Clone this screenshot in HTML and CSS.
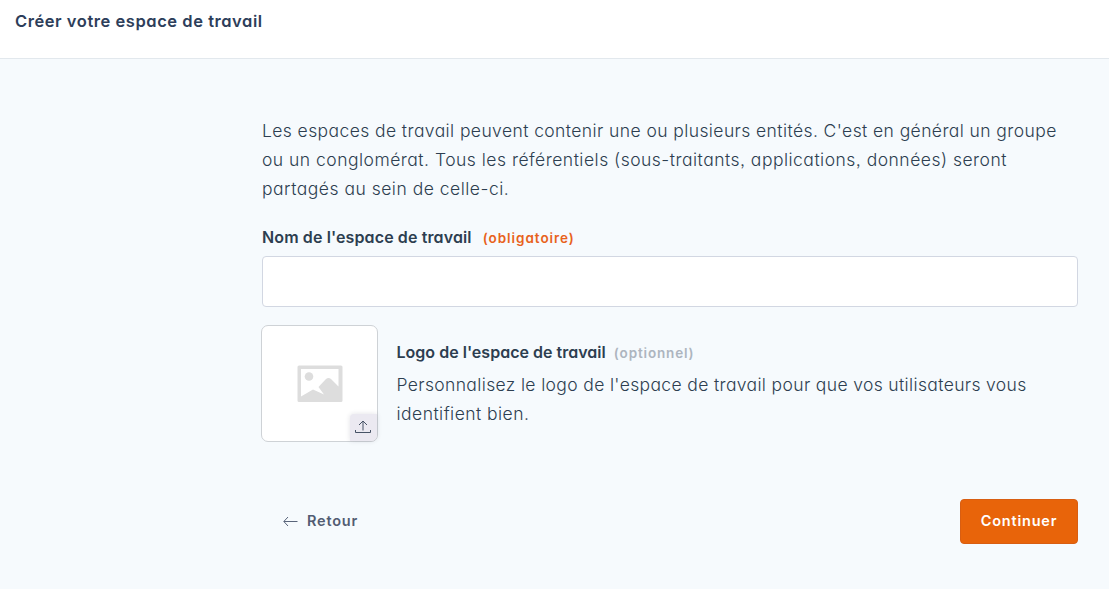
FILE: index.html
```html
<!DOCTYPE html>
<html lang="fr">
<head>
<meta charset="utf-8">
<title>Créer votre espace de travail</title>
<link rel="stylesheet" href="styles.css">
</head>
<body>
<header class="topbar"><h1 class="title">Créer votre espace de travail</h1></header>
<main class="content">
  <p class="text intro">
    <span class="line line-a">Les espaces de travail peuvent contenir une ou plusieurs entités. C'est en général un groupe</span>
    <span class="line line-b">ou un conglomérat. Tous les référentiels (sous-traitants, applications, données) seront</span>
    <span class="line line-c">partagés au sein de celle-ci.</span>
  </p>
  <div class="label-row">
    <label class="label" for="name">Nom de l'espace de travail</label>
    <span class="hint required">(obligatoire)</span>
  </div>
  <input class="field" id="name" type="text">
  <section class="logo-row">
    <div class="preview">
      <svg class="placeholder" width="46" height="38" viewBox="0 0 46 38">
        <path fill="#ddd" fill-rule="evenodd" d="M2 .5h42a1.500 1.500 0 0 1 1.500 1.500v33.500a1.500 1.500 0 0 1-1.500 1.500H2A1.500 1.500 0 0 1 .5 35.500V2A1.500 1.500 0 0 1 2 .5zM4 4v27.500L16 24.500l11 5-5.500-7.500 7.500-8q2.500-2 5 0l7.500 7.500V4z"/>
        <circle cx="12" cy="11.500" r="4.300" fill="#ddd"/>
      </svg>
      <button class="upload" aria-label="Importer">
        <svg width="16" height="14" viewBox="0 0 16 14" fill="none" stroke="#475366" stroke-width="1"><path d="M8 10.500V1M4 5l4-4 4 4M.5 10v2.500h15V10"/></svg>
      </button>
    </div>
    <div class="details">
      <div class="label-row">
        <span class="label logo-label">Logo de l'espace de travail</span>
        <span class="hint optional">(optionnel)</span>
      </div>
      <p class="text">
        <span class="line line-d">Personnalisez le logo de l'espace de travail pour que vos utilisateurs vous</span>
        <span class="line line-e">identifient bien.</span>
      </p>
    </div>
  </section>
  <footer class="actions">
    <a class="back"><svg width="15" height="10" viewBox="0 0 15 10" fill="none" stroke="#59647a" stroke-width="1"><path d="M14.500 5.500H1M5 1L.8 5.500 5 10"/></svg><span>Retour</span></a>
    <button class="submit">Continuer</button>
  </footer>
</main>
</body>
</html>
```
FILE: styles.css
```css
* { box-sizing: border-box; }
body {
  margin: 0;
  height: 589px;
  overflow: hidden;
  background: #f6fafd;
  color: #2d3e50;
  font-family: Inter, "Open Sans", sans-serif;
  font-feature-settings: "cv11", "ss03";
}
p, h1 { margin: 0; }
.topbar { height: 59px; padding: 9px 15px; background: #fff; border-bottom: 1px solid #e2e8ed; }
.title { font-size: 16.500px; line-height: 24px; font-weight: 560; letter-spacing: 0.55px; color: #2d3e5a; white-space: nowrap; }
.content { width: 816px; margin-left: 262px; padding-top: 57px; }
.text { font-size: 17.500px; line-height: 29px; font-weight: 300; }
.line { display: block; white-space: nowrap; }
.line-a { letter-spacing: 0.41px; }
.line-b { letter-spacing: 0.49px; }
.line-c { letter-spacing: 0.5px; }
.line-d { letter-spacing: 0.36px; }
.line-e { letter-spacing: 0.46px; }
.label-row { display: flex; align-items: baseline; height: 24px; white-space: nowrap; }
.intro + .label-row { margin-top: 22px; }
.label { font-size: 16px; line-height: 24px; font-weight: 580; letter-spacing: 0.12px; }
.logo-label { letter-spacing: 0.02px; }
.hint { font-size: 13.500px; line-height: 20px; font-weight: 580; letter-spacing: 0.95px; }
.required { margin-left: 11px; color: #e8621b; }
.optional { margin-left: 8px; letter-spacing: 0.85px; color: #adb5bf; }
.field { display: block; width: 816px; height: 51px; margin-top: 7px; border: 1px solid #d2d7e2; border-radius: 4px; background: #fff; outline: none; }
.logo-row { display: flex; gap: 18.500px; margin: 18px 0 0 -1px; }
.preview { position: relative; display: flex; align-items: center; justify-content: center; width: 117px; height: 117px; border: 1px solid #ced2d6; border-radius: 7px; background: #fff; }
.upload { position: absolute; right: 0; bottom: 0; display: flex; align-items: center; justify-content: center; width: 27px; height: 27px; padding: 0 2px 2px 0; border: 0; border-radius: 4px 0 6px 0; background: #ebe9f1; box-shadow: 0 0 5px rgba(40, 40, 70, .14); }
.details { padding-top: 15px; }
.details .text { margin-top: 6px; }
.actions { display: flex; justify-content: space-between; align-items: center; margin-top: 57px; padding-left: 21px; }
.back { display: flex; align-items: center; gap: 9px; padding-bottom: 2px; color: #525c72; font-size: 14.500px; line-height: 22px; font-weight: 600; letter-spacing: 0.8px; }
.back svg { overflow: visible; }
.submit { width: 118px; height: 45px; padding: 0 0 2px; border: 1px solid #d85e12; border-radius: 4px; background: #e8640a; color: #fff; font: 600 14.500px/22px Inter, "Open Sans", sans-serif; font-feature-settings: inherit; letter-spacing: 0.8px; }
```
